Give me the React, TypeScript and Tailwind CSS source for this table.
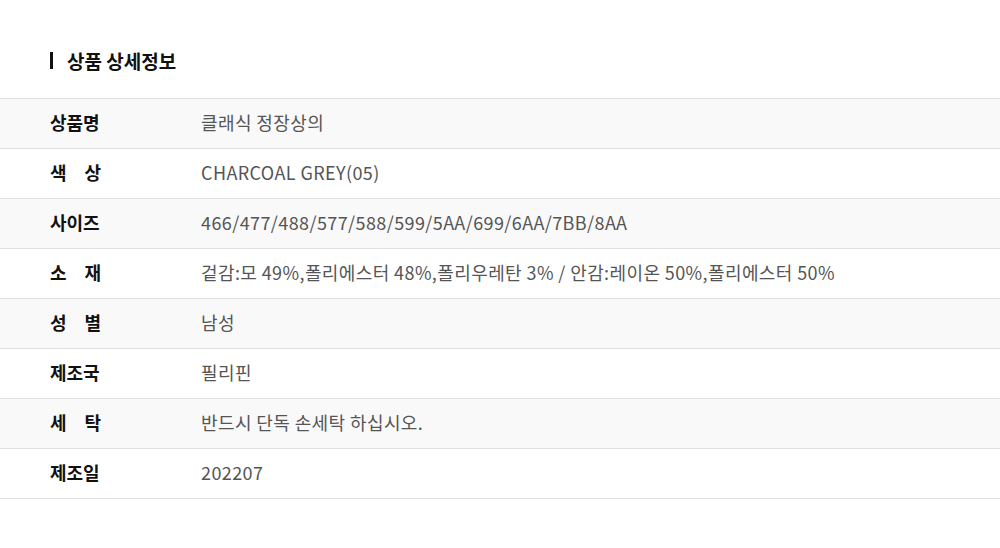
import React from "react";

const rows: { label: string[]; value: string }[] = [
  { label: ["상품명"], value: "클래식 정장상의" },
  { label: ["색", "상"], value: "CHARCOAL GREY(05)" },
  { label: ["사이즈"], value: "466/477/488/577/588/599/5AA/699/6AA/7BB/8AA" },
  { label: ["소", "재"], value: "겉감:모 49%,폴리에스터 48%,폴리우레탄 3% / 안감:레이온 50%,폴리에스터 50%" },
  { label: ["성", "별"], value: "남성" },
  { label: ["제조국"], value: "필리핀" },
  { label: ["세", "탁"], value: "반드시 단독 손세탁 하십시오." },
  { label: ["제조일"], value: "202207" },
];

export default function App() {
  return (
    <div
      className="w-[1000px] h-[548px] bg-white pt-[48px]"
      style={{ fontFamily: '"Noto Sans CJK KR", "Noto Sans", sans-serif' }}
    >
      <div className="flex items-center h-[24px] pl-[50px]">
        <div className="w-[3px] h-[17px] bg-[#111]" />
        <div className="ml-[14px] text-[19px] font-bold text-[#111] leading-none">
          상품 상세정보
        </div>
      </div>
      <div className="mt-[26px] border-t border-[#e0e0e0]">
        {rows.map((r, i) => (
          <div
            key={i}
            className={`flex items-center h-[50px] pb-[3px] border-b border-[#e0e0e0] ${
              i % 2 === 0 ? "bg-[#f9f9f9]" : "bg-white"
            }`}
          >
            <div className="w-[201px] pl-[50px] shrink-0">
              <div className="flex justify-between w-[51px] text-[18px] leading-[24px] font-bold text-[#111]">
                {r.label.map((l, j) => (
                  <span key={j}>{l}</span>
                ))}
              </div>
            </div>
            <div className="text-[18px] leading-[24px] text-[#555] tracking-[0.4px]">{r.value}</div>
          </div>
        ))}
      </div>
    </div>
  );
}
